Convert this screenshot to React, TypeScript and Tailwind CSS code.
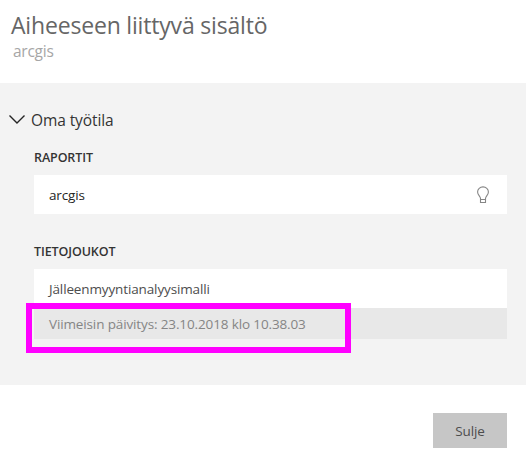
function Chevron() {
  return (
    <svg className="ml-[9px] h-5 w-[22px] shrink-0" viewBox="0 0 22 20" fill="none" stroke="#252525" strokeWidth="1.4">
      <path d="M0.5 5.500 L8 13 L15.500 5.500" />
    </svg>
  );
}

function Bulb() {
  return (
    <svg className="h-[18px] w-3 shrink-0" viewBox="0 0 12 18" fill="none" stroke="#868686" strokeWidth="1.1">
      <path d="M3.500 13.500V12.500C3.500 10.500 .6 9 .6 6C.6 3 3 .9 6 .9S11.400 3 11.400 6C11.400 9 8.500 10.500 8.500 12.500V16.500H3.500V13.500H8.500" />
    </svg>
  );
}

export default function App() {
  return (
    <div className="h-[460px] w-[526px] overflow-hidden bg-white font-['Open_Sans','Noto_Sans',sans-serif] whitespace-nowrap">
      <header className="h-[83px] pt-[9px]">
        <h1 className="ml-[11px] text-[23px] leading-8 tracking-[-0.18px] text-[#666666]">Aiheeseen liittyvä sisältö</h1>
        <p className="ml-[13px] text-[15.5px] leading-5 tracking-[-0.25px] text-[#a6a6a6]">arcgis</p>
      </header>
      <main className="h-[302px] bg-[#f3f3f3] pt-[27px]">
        <div className="flex h-5 items-center">
          <Chevron />
          <h2 className="text-[15.5px] leading-5 tracking-[-0.1px] text-[#333333]">Oma työtila</h2>
        </div>
        <div className="ml-[34px] w-[473px]">
          <h3 className="mt-[20px] text-[12.5px] leading-4 font-semibold tracking-[-0.1px] text-[#333333]">RAPORTIT</h3>
          <div className="mt-[9px] flex h-[39px] items-center justify-between bg-white pr-[18px] pl-[15px]">
            <span className="text-[13.5px] leading-5 tracking-[-0.13px] text-[#252525]">arcgis</span>
            <Bulb />
          </div>
          <h3 className="mt-[30px] text-[12.5px] leading-4 font-semibold tracking-[-0.1px] text-[#333333]">TIETOJOUKOT</h3>
          <div className="relative mt-[9px]">
            <div className="flex h-[39px] items-center bg-white pl-[15px]">
              <span className="text-[13.5px] leading-5 tracking-[-0.13px] text-[#4d4d4d]">Jälleenmyyntianalyysimalli</span>
            </div>
            <div className="flex h-[31px] items-center bg-[#e8e8e8] pl-[15px]">
              <span className="text-[13.5px] leading-5 tracking-[-0.13px] text-[#858585]">Viimeisin päivitys: 23.10.2018 klo 10.38.03</span>
            </div>
            <div className="absolute top-[34px] -left-2 h-[50px] w-[325px] border-6 border-[#ff00ff]" />
          </div>
        </div>
      </main>
      <footer className="flex justify-end pt-7 pr-[19px]">
        <button className="h-[35px] w-[74px] bg-[#c6c6c6] text-[13.5px] leading-5 tracking-[-0.1px] text-[#4d4d4d]">Sulje</button>
      </footer>
    </div>
  );
}
